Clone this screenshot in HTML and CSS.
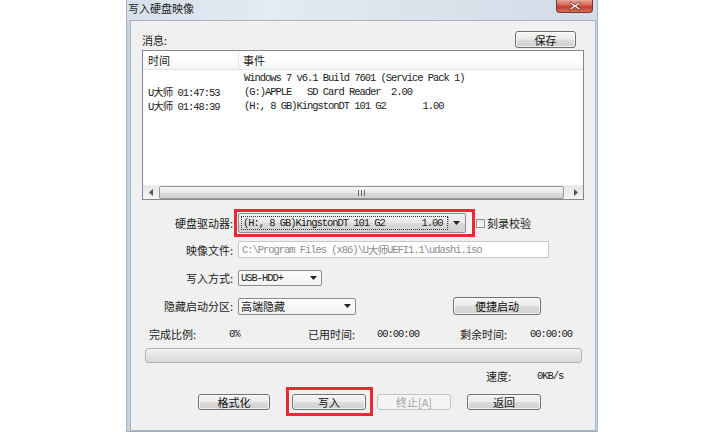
FILE: index.html
```html
<!DOCTYPE html>
<html lang="zh">
<head>
<meta charset="utf-8">
<title>写入硬盘映像</title>
<link rel="stylesheet" href="styles.css">
</head>
<body>
<div class="stage">
  <div class="window">
    <div class="titlebar">
      <span class="title">写入硬盘映像</span>
      <span class="close"><svg width="14" height="10" viewBox="0 0 14 10"><path d="M3 1 L7 4 L11 1 L12.5 2.2 L8.8 5 L12.5 7.8 L11 9 L7 6 L3 9 L1.5 7.8 L5.2 5 L1.5 2.2 Z" fill="#fff" stroke="#6b2a2a" stroke-width="0.8"/></svg></span>
    </div>
    <div class="content">
      <div class="msgrow">
        <span class="lbl">消息:</span>
        <span class="btn save">保存</span>
      </div>
      <div class="listbox">
        <div class="lhead">
          <div class="c1">时间</div>
          <div class="c2">事件</div>
        </div>
        <div class="lrows">
          <div class="lrow"><span class="c1"></span><span class="c2">Windows 7 v6.1 Build 7601 (Service Pack 1)</span></div>
          <div class="lrow"><span class="c1">U<span class="cjk">大师</span> 01:47:53</span><span class="c2">(G:)APPLE   SD Card Reader  2.00</span></div>
          <div class="lrow"><span class="c1">U<span class="cjk">大师</span> 01:48:39</span><span class="c2">(H:, 8 GB)KingstonDT 101 G2       1.00</span></div>
        </div>
        <div class="hscroll">
          <span class="sarrow"><svg width="5" height="7" viewBox="0 0 5 7"><path d="M4 0 L0 3.5 L4 7 Z" fill="#555"/></svg></span>
          <span class="thumb"><svg width="7" height="6" viewBox="0 0 7 6"><path d="M0.5 0 V6 M3.5 0 V6 M6.5 0 V6" stroke="#666" stroke-width="1"/></svg></span>
          <span class="sarrow"><svg width="5" height="7" viewBox="0 0 5 7"><path d="M1 0 L5 3.5 L1 7 Z" fill="#555"/></svg></span>
        </div>
      </div>

      <div class="form">
        <div class="frow r-drive">
          <span class="flabel">硬盘驱动器:</span>
          <span class="redbox drivebox">
            <span class="combo drive">
              <span class="ctext"><span class="focus">(H:, 8 GB)KingstonDT 101 G2       1.00</span></span>
              <span class="carrow"><svg width="7" height="4" viewBox="0 0 7 4"><path d="M0 0 H7 L3.5 4 Z" fill="#222"/></svg></span>
            </span>
          </span>
          <span class="chk"></span>
          <span class="chklbl">刻录校验</span>
        </div>
        <div class="frow r-image">
          <span class="flabel">映像文件:</span>
          <span class="field">C:\Program Files (x86)\U<span class="cjk">大师</span>UEFI1.1\udashi.iso</span>
        </div>
        <div class="frow r-mode">
          <span class="flabel">写入方式:</span>
          <span class="combo plain mode">
            <span class="ctext">USB-HDD+</span>
            <span class="carrow"><svg width="7" height="4" viewBox="0 0 7 4"><path d="M0 0 H7 L3.5 4 Z" fill="#222"/></svg></span>
          </span>
        </div>
        <div class="frow r-hidden">
          <span class="flabel">隐藏启动分区:</span>
          <span class="combo plain hidden">
            <span class="ctext cjk">高端隐藏</span>
            <span class="carrow"><svg width="7" height="4" viewBox="0 0 7 4"><path d="M0 0 H7 L3.5 4 Z" fill="#222"/></svg></span>
          </span>
          <span class="btn quick">便捷启动</span>
        </div>
        <div class="stats">
          <span class="s1">完成比例:</span>
          <span class="s2 mono">0%</span>
          <span class="s3">已用时间:</span>
          <span class="s4 mono">00:00:00</span>
          <span class="s5">剩余时间:</span>
          <span class="s6 mono">00:00:00</span>
        </div>
        <div class="progress"></div>
        <div class="speed">
          <span class="sp1">速度:</span>
          <span class="sp2 mono">0KB/s</span>
        </div>
        <div class="btnrow">
          <span class="btn b-format">格式化</span>
          <span class="redbox writebox"><span class="btn b-write">写入</span></span>
          <span class="btn b-stop disabled">终止[A]</span>
          <span class="btn b-back">返回</span>
        </div>
      </div>
    </div>
  </div>
</div>
</body>
</html>
```

FILE: styles.css
```css
* { box-sizing: border-box; }
html, body { margin: 0; padding: 0; background: #ffffff; }
body {
  width: 720px;
  height: 432px;
  overflow: hidden;
  font-family: "Noto Sans CJK SC", "Liberation Sans", sans-serif;
  font-size: 11px;
  color: #1a1a1a;
}
.stage { padding-left: 126px; }
.window {
  width: 472px;
  height: 432px;
  display: flex;
  flex-direction: column;
  background: linear-gradient(90deg, #c6d2de 0%, #d3dde8 40%, #cdd8e4 100%);
  border-left: 1px solid #a5b4c4;
  border-right: 1px solid #aab7c5;
  border-bottom: 1px solid #9eacbb;
}
.titlebar {
  height: 20px;
  flex: none;
  display: flex;
  align-items: flex-start;
  justify-content: space-between;
  background: linear-gradient(90deg, #d6e0ea 0%, #e4ebf2 30%, #dbe3ec 60%, #d2dce7 100%);
}
.title {
  margin-left: 1px;
  margin-top: 1px;
  font-size: 11px;
  line-height: 14px;
  color: #1e1e1e;
}
.close {
  width: 37px;
  height: 13px;
  margin-right: 4px;
  display: flex;
  align-items: center;
  justify-content: center;
  background: linear-gradient(#e8a89c 0%, #d7604f 45%, #c23c2a 55%, #d0705e 100%);
  border: 1px solid #7e3428;
  border-top: none;
  border-radius: 0 0 4px 4px;
}
.content {
  flex: 1;
  margin: 0 1px 0 3px;
  background: #f0f0f0;
  border: 1px solid #a9b4c0;
  display: flex;
  flex-direction: column;
}
.mono, .lrow, .field, .ctext {
  font-family: "Liberation Mono", "Noto Sans CJK SC", monospace;
  font-size: 10.5px;
  letter-spacing: -1.05px;
  white-space: pre;
}
.cjk { font-family: "Noto Sans CJK SC", sans-serif; }

/* message row */
.msgrow {
  height: 29px;
  flex: none;
  display: flex;
  align-items: flex-end;
  justify-content: space-between;
  padding: 0 19px 2px 11px;
}
.msgrow .lbl { line-height: 14px; margin-bottom: 1px; }

.btn {
  display: flex;
  align-items: center;
  justify-content: center;
  height: 17px;
  border: 1px solid #707070;
  border-radius: 3px;
  background: linear-gradient(#f4f4f4 0%, #ebebeb 48%, #dddddd 52%, #cfcfcf 100%);
  box-shadow: inset 0 0 0 1px rgba(255,255,255,0.7);
  font-size: 11px;
  color: #111;
}
.btn.save { width: 61px; }

/* list box */
.listbox {
  height: 150px;
  flex: none;
  margin: 0 11px 0 11px;
  border: 1px solid #828790;
  background: #fff;
  display: flex;
  flex-direction: column;
}
.lhead {
  height: 19px;
  flex: none;
  display: flex;
  background: linear-gradient(#ffffff 0%, #ffffff 50%, #f3f4f6 100%);
  border-bottom: 1px solid #e2e4e8;
  line-height: 18px;
}
.lhead .c1 { width: 96px; padding-left: 5px; border-right: 1px solid #e3e5e8; }
.lhead .c2 { padding-left: 4px; }
.lrows { flex: 1; padding-top: 1px; }
.lrow { height: 14px; line-height: 14px; display: flex; color: #1c1c1c; }
.lrow .c1 { width: 100px; padding-left: 5px; }
.lrow .c1 .cjk { letter-spacing: -1px; }
.lrow .c2 { padding-left: 1px; }

.hscroll {
  height: 14px;
  flex: none;
  display: flex;
  align-items: stretch;
  background: linear-gradient(#e6e6e6, #f4f4f4);
  border-top: 1px solid #f0f0f0;
}
.sarrow {
  width: 16px;
  display: flex;
  align-items: center;
  justify-content: center;
}
.thumb {
  flex: 1;
  margin: 0 3px 0 0;
  border: 1px solid #979797;
  border-radius: 2px;
  background: linear-gradient(#f5f5f5 0%, #e9e9e9 50%, #d9d9d9 51%, #d2d2d2 100%);
  display: flex;
  align-items: center;
  justify-content: center;
}

/* form */
.form { display: flex; flex-direction: column; margin-top: 9px; }
.frow { display: flex; align-items: center; }
.flabel { width: 102px; text-align: right; line-height: 14px; }
.redbox { border: 3px solid #ea2a33; display: flex; }
.drivebox { margin-left: 1px; padding: 1px 6px 1px 1px; }
.combo {
  display: flex;
  align-items: center;
  border: 1px solid #8b8b8b;
  border-radius: 2px;
}
.combo.drive {
  width: 228px;
  height: 20px;
  background: linear-gradient(#f2f2f2 0%, #e8e8e8 50%, #dadada 51%, #d2d2d2 100%);
  padding: 2px;
}
.combo .ctext { flex: 1; display: flex; align-items: center; height: 100%; padding-left: 2px; overflow: hidden; }
.combo.drive .ctext { padding-left: 0; }
.focus {
  display: flex;
  align-items: center;
  width: 100%;
  height: 100%;
  border: 1px dotted #333;
  padding-left: 1px;
}
.carrow {
  width: 15px;
  height: 100%;
  display: flex;
  align-items: center;
  justify-content: center;
  border-left: 1px solid #c8c8c8;
}
.chk {
  width: 9px;
  height: 9px;
  margin-left: 1px;
  border: 1px solid #8f8f8f;
  background: linear-gradient(#e8e8e8, #fafafa);
}
.chklbl { margin-left: 2px; }

.r-image { margin-top: 4px; height: 17px; }
.field {
  margin-left: 5px;
  width: 311px;
  height: 17px;
  border: 1px solid #c6cad0;
  background: #fff;
  color: #8c8c8c;
  display: flex;
  align-items: center;
  padding-left: 3px;
}
.field .cjk { letter-spacing: -1px; }
.r-mode { margin-top: 12px; height: 16px; }
.combo.plain {
  margin-left: 5px;
  height: 16px;
  background: linear-gradient(#fdfdfd, #f2f2f2);
}
.combo.plain .carrow { border-left: none; }
.combo.mode { width: 84px; }
.r-hidden { margin-top: 11px; height: 18px; }
.combo.hidden { width: 118px; height: 17px; }
.combo .ctext.cjk { font-family: "Noto Sans CJK SC", sans-serif; font-size: 11px; letter-spacing: 0; }
.btn.quick { margin-left: 97px; width: 88px; height: 18px; }

.stats {
  margin-top: 12px;
  height: 14px;
  line-height: 14px;
  display: flex;
  padding-left: 18px;
}
.s1 { width: 80px; }
.s2 { width: 79px; }
.s3 { width: 69px; }
.s4 { width: 83px; }
.s5 { width: 70px; }

.progress {
  margin: 7px 0 0 14px;
  width: 437px;
  height: 15px;
  border: 1px solid #b2b2b2;
  border-radius: 3px;
  background: linear-gradient(#f2f2f2 0%, #e4e4e4 50%, #d8d8d8 100%);
}
.speed {
  margin-top: 6px;
  height: 14px;
  line-height: 14px;
  display: flex;
  padding-left: 355px;
}
.sp1 { width: 51px; }

.btnrow {
  margin-top: 4px;
  height: 29px;
  display: flex;
  align-items: center;
  padding-left: 67px;
}
.btnrow .btn { height: 16px; width: 74px; }
.btn.b-format { width: 72px; }
.writebox { margin-left: 16px; padding: 4px 4px 3px 3px; }
.btn.b-stop { margin-left: 4px; }
.btn.b-back { margin-left: 16px; }
.btn.disabled {
  color: #a3a3a3;
  border-color: #c4c4c4;
  background: #f4f4f4;
  box-shadow: none;
}
```
